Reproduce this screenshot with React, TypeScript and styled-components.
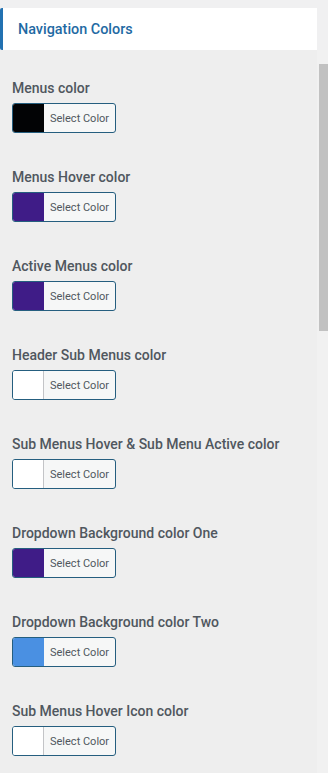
import styled, { createGlobalStyle } from "styled-components"

const GlobalStyle = createGlobalStyle`
  html, body {
    margin: 0;
    padding: 0;
    background: #f0f0f1;
    font-family: Roboto, "Liberation Sans", sans-serif;
  }
`

const colorFields = [
  { label: "Menus color", value: "#020305" },
  { label: "Menus Hover color", value: "#3f1c87" },
  { label: "Active Menus color", value: "#3f1c87" },
  { label: "Header Sub Menus color", value: "#ffffff" },
  { label: "Sub Menus Hover & Sub Menu Active color", value: "#ffffff" },
  { label: "Dropdown Background color One", value: "#3f1c87" },
  { label: "Dropdown Background color Two", value: "#4a90e2" },
  { label: "Sub Menus Hover Icon color", value: "#ffffff" },
]

function App() {
  return (
    <Page>
      <GlobalStyle />
      <Panel>
        <SectionTitle>Navigation Colors</SectionTitle>
        <Body>
          <Fields>
            {colorFields.map(f => (
              <Field key={f.label}>
                <FieldLabel>{f.label}</FieldLabel>
                <PickerButton type="button">
                  <Swatch $color={f.value} />
                  <PickerText>Select Color</PickerText>
                </PickerButton>
              </Field>
            ))}
          </Fields>
          <ScrollTrack>
            <ScrollThumb />
          </ScrollTrack>
        </Body>
      </Panel>
    </Page>
  )
}

const Page = styled.div`
  padding-top: 8px;
  height: 765px;
  overflow: hidden;
`

const Panel = styled.div`
  display: flex;
  flex-direction: column;
`

const SectionTitle = styled.div`
  width: 317px;
  height: 42px;
  box-sizing: border-box;
  display: flex;
  align-items: center;
  padding-left: 15px;
  background: #ffffff;
  border-left: 3px solid #2271b1;
  border-radius: 2px 0 0 2px;
  color: #1f6aa3;
  font-size: 14.4px;
  font-weight: 500;
`

const Body = styled.div`
  display: flex;
  flex: 1;
`

const Fields = styled.div`
  width: 317px;
  background: #eeeeee;
  padding: 28px 0 0 12px;
  box-sizing: border-box;
  display: flex;
  flex-direction: column;
  gap: 34px;
  min-height: 723px;
`

const Field = styled.div`
  display: flex;
  flex-direction: column;
  align-items: flex-start;
  gap: 5px;
`

const FieldLabel = styled.div`
  font-size: 14px;
  line-height: 20px;
  font-weight: 500;
  color: #50575e;
`

const PickerButton = styled.button`
  display: flex;
  align-items: stretch;
  width: 104px;
  height: 30px;
  padding: 0;
  margin: 0;
  border: 1px solid #255e7f;
  border-radius: 3px;
  overflow: hidden;
  background: #f6f7f7;
  cursor: pointer;
  font-family: inherit;
`

const Swatch = styled.span<{ $color: string }>`
  width: 30px;
  flex: none;
  background: ${p => p.$color};
  border-right: 1px solid ${p => (p.$color === "#ffffff" ? "#c3c4c7" : p.$color)};
`

const PickerText = styled.span`
  flex: 1;
  display: flex;
  align-items: center;
  padding-left: 6px;
  font-size: 11px;
  color: #50575e;
`

const ScrollTrack = styled.div`
  width: 11px;
  background: #f1f1f1;
  padding-top: 14px;
  display: flex;
  flex-direction: column;
  align-items: flex-end;
`

const ScrollThumb = styled.div`
  width: 9px;
  height: 267px;
  background: #c1c1c1;
`

export default App
